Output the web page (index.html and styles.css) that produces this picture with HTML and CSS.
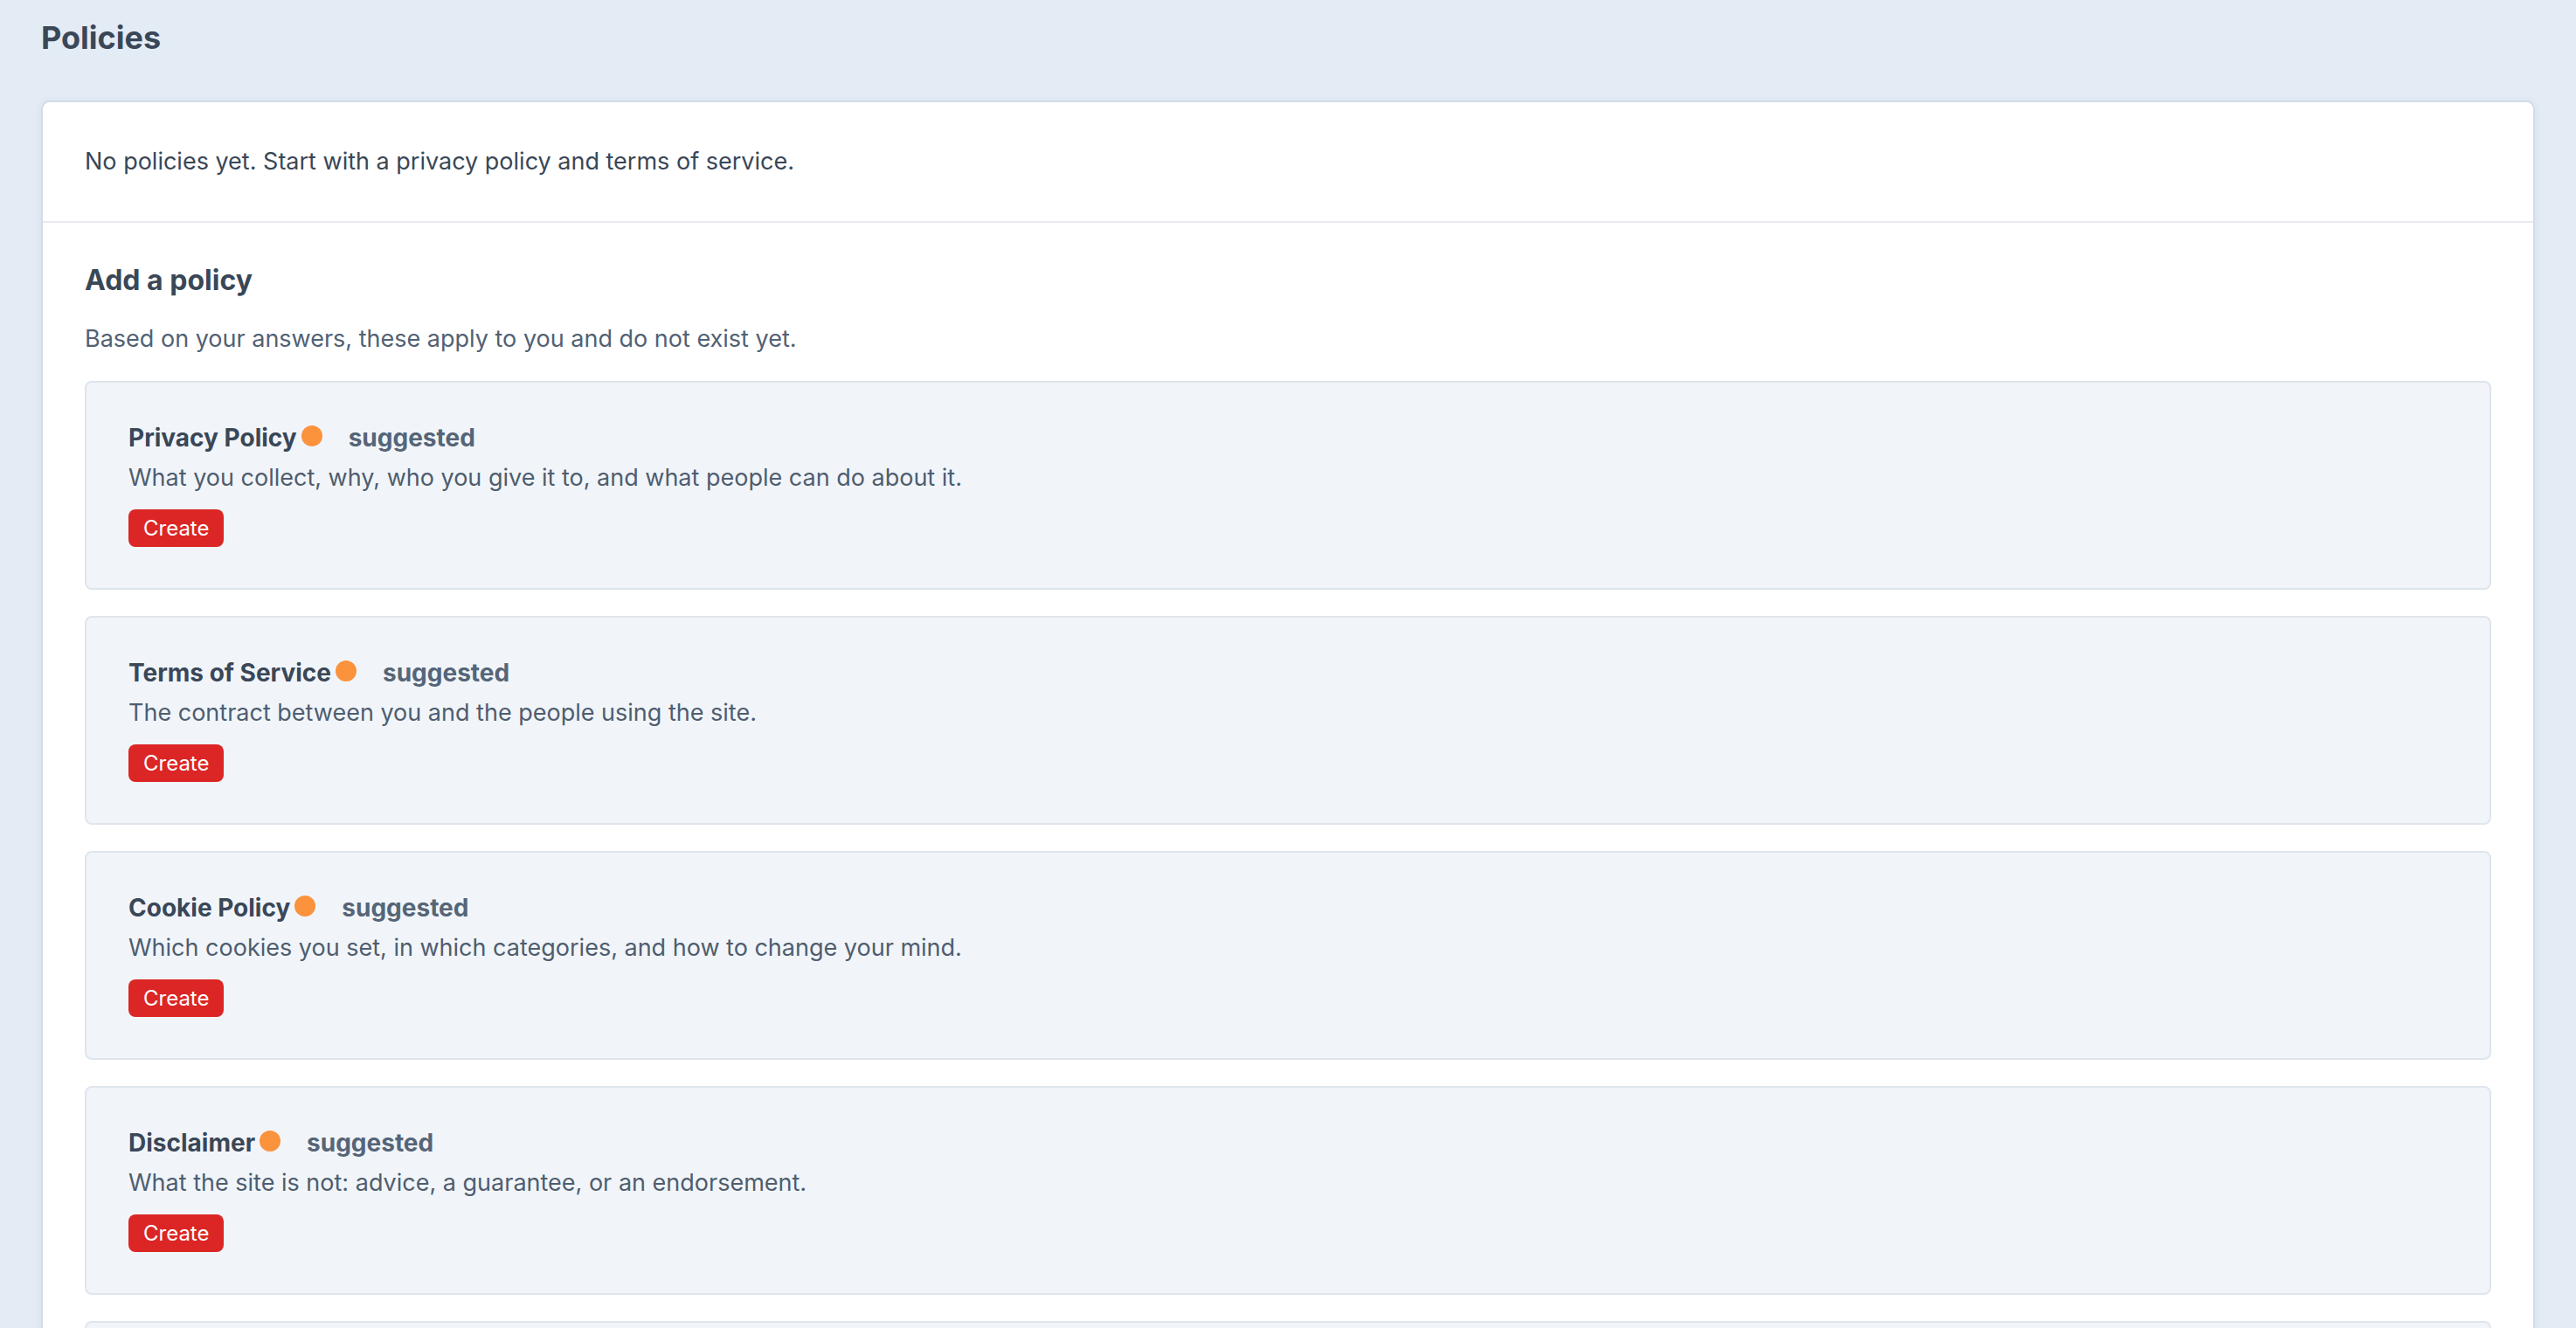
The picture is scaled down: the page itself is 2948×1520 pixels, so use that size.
FILE: index.html
```html
<!DOCTYPE html>
<html lang="en">
<head>
    <meta charset="UTF-8">
    <meta name="viewport" content="width=device-width, initial-scale=1.0">
    <title>Policies</title>
    <link rel="stylesheet" href="styles.css">
</head>
<body>
    <div class="page">
        <h1 class="page-title">Policies</h1>

        <div class="panel">
            <div class="panel-empty">
                No policies yet. Start with a privacy policy and terms of service.
            </div>

            <div class="panel-body">
                <h2>Add a policy</h2>
                <p class="lead">Based on your answers, these apply to you and do not exist yet.</p>

                <div class="policy-card">
                    <div class="policy-head">
                        <span class="policy-name">Privacy Policy</span>
                        <span class="dot"></span>
                        <span class="tag">suggested</span>
                    </div>
                    <p class="policy-desc">What you collect, why, who you give it to, and what people can do about it.</p>
                    <button class="btn-create">Create</button>
                </div>

                <div class="policy-card">
                    <div class="policy-head">
                        <span class="policy-name">Terms of Service</span>
                        <span class="dot"></span>
                        <span class="tag">suggested</span>
                    </div>
                    <p class="policy-desc">The contract between you and the people using the site.</p>
                    <button class="btn-create">Create</button>
                </div>

                <div class="policy-card">
                    <div class="policy-head">
                        <span class="policy-name">Cookie Policy</span>
                        <span class="dot"></span>
                        <span class="tag">suggested</span>
                    </div>
                    <p class="policy-desc">Which cookies you set, in which categories, and how to change your mind.</p>
                    <button class="btn-create">Create</button>
                </div>

                <div class="policy-card">
                    <div class="policy-head">
                        <span class="policy-name">Disclaimer</span>
                        <span class="dot"></span>
                        <span class="tag">suggested</span>
                    </div>
                    <p class="policy-desc">What the site is not: advice, a guarantee, or an endorsement.</p>
                    <button class="btn-create">Create</button>
                </div>

                <div class="policy-card">
                    <div class="policy-head">
                        <span class="policy-name">Accessibility Statement</span>
                        <span class="dot"></span>
                        <span class="tag">suggested</span>
                    </div>
                    <p class="policy-desc">How accessible the site is and how to report a problem.</p>
                    <button class="btn-create">Create</button>
                </div>
            </div>
        </div>
    </div>
</body>
</html>
```

FILE: styles.css
```css
body {
    margin: 0;
    padding: 0;
    background-color: #e3ebf5;
    font-family: Inter, "Noto Sans", sans-serif;
    color: #3a4757;
}
.page {
    padding: 19px 47px 48px;
}
.page-title {
    margin: 0 0 48px;
    font-size: 36px;
    line-height: 48px;
    font-weight: 700;
    color: #3a4757;
}
.panel {
    background: #fff;
    border: 2px solid #d2dbe7;
    border-radius: 10px;
    box-shadow: 0 2px 10px rgba(40, 70, 110, 0.08);
}
.panel-empty {
    padding: 48px;
    font-size: 27px;
    line-height: 40px;
    border-bottom: 2px solid #e7eaee;
}
.panel-body {
    padding: 46px 48px 48px;
}
.panel-body h2 {
    margin: 0 0 28px;
    font-size: 32px;
    line-height: 40px;
    font-weight: 700;
}
.lead {
    margin: 0 0 29px;
    font-size: 27px;
    line-height: 38px;
    color: #526173;
}
.policy-card {
    background: #f1f5fa;
    border: 2px solid #dfe5ec;
    border-radius: 8px;
    padding: 43px 48px 47px;
    margin-bottom: 30px;
}
.policy-head {
    display: flex;
    align-items: center;
    font-size: 28px;
    line-height: 40px;
    font-weight: 700;
}
.dot {
    width: 24px;
    height: 24px;
    border-radius: 50%;
    background: #fb923c;
    margin-left: 5px;
    margin-top: -4px;
}
.tag {
    margin-left: 30px;
    color: #566577;
}
.policy-desc {
    margin: 7px 0 17px;
    font-size: 27px;
    line-height: 38px;
    color: #4f5d6e;
}
.btn-create {
    display: block;
    height: 43px;
    padding: 0 17px;
    border: none;
    border-radius: 8px;
    background: #dc2626;
    color: #fff;
    font-family: inherit;
    font-size: 24px;
    cursor: pointer;
}
.btn-create:hover {
    background: #c81e1e;
}
```
